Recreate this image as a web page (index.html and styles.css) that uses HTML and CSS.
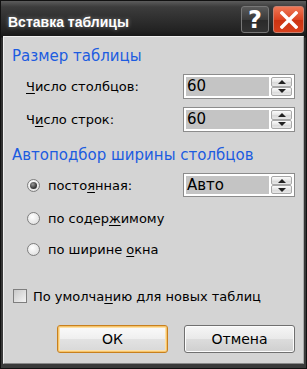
FILE: index.html
```html
<!DOCTYPE html>
<html lang="ru">
<head>
<meta charset="utf-8">
<link rel="stylesheet" href="styles.css">
</head>
<body>
<div class="window">
  <div class="titlebar">
    <div class="title">Вставка таблицы</div>
    <div class="tbtns">
      <div class="tbtn help">?</div>
      <div class="tbtn close">
        <svg width="18" height="18" viewBox="0 0 18 18"><path d="M2 2 L16 16 M16 2 L2 16" stroke="#fff" stroke-width="3.4" stroke-linecap="square"/></svg>
      </div>
    </div>
  </div>
  <div class="client">
    <div class="header h1">Размер таблицы</div>
    <div class="row r1">
      <div class="label"><u>Ч</u>исло столбцов:</div>
      <div class="spin"><div class="field">60</div><div class="arrows"><div class="arr up"><span class="tri-up"></span></div><div class="arr dn"><span class="tri-dn"></span></div></div></div>
    </div>
    <div class="row r2">
      <div class="label">Ч<u>и</u>сло строк:</div>
      <div class="spin"><div class="field">60</div><div class="arrows"><div class="arr up"><span class="tri-up"></span></div><div class="arr dn"><span class="tri-dn"></span></div></div></div>
    </div>
    <div class="header h2">Автоподбор ширины столбцов</div>
    <div class="row rr1">
      <div class="opt"><span class="radio on"></span><span>посто<u>я</u>нная:</span></div>
      <div class="spin combo"><div class="field">Авто</div><div class="arrows"><div class="arr up"><span class="tri-up"></span></div><div class="arr dn"><span class="tri-dn"></span></div></div></div>
    </div>
    <div class="row rr2">
      <div class="opt"><span class="radio"></span><span>по содер<u>ж</u>имому</span></div>
    </div>
    <div class="row rr3">
      <div class="opt"><span class="radio"></span><span>по ширине <u>о</u>кна</span></div>
    </div>
    <div class="row chk">
      <div class="opt"><span class="checkbox"></span><span>По умолча<u>н</u>ию для новых таблиц</span></div>
    </div>
    <div class="buttons">
      <div class="btn ok">ОК</div>
      <div class="btn">Отмена</div>
    </div>
  </div>
</div>
</body>
</html>
```
FILE: styles.css
```css
html, body {
  margin: 0;
  padding: 0;
  background: #2a2a2a;
}
.window {
  width: 307px;
  height: 369px;
  box-sizing: border-box;
  display: flex;
  flex-direction: column;
  background: linear-gradient(#5c5c5c 0px, #3c3c3c 6px, #222 30px, #161616 36px, #2e2e2e 37px, #3a3a3a 100%);
  border: 1px solid #111;
  font-family: "DejaVu Sans", Tahoma, sans-serif;
  font-size: 13px;
  color: #000;
}
.titlebar {
  height: 35px;
  display: flex;
  align-items: flex-start;
  justify-content: space-between;
  padding: 0 2px 0 7px;
  flex-shrink: 0;
}
.title {
  color: #fff;
  font-family: "Liberation Sans", Arial, sans-serif;
  font-weight: bold;
  font-size: 14px;
  line-height: 18px;
  margin-top: 12px;
  text-shadow: 0 0 4px rgba(255,255,255,0.4);
}
.tbtns {
  display: flex;
  gap: 4px;
  margin-top: 5px;
}
.tbtn {
  height: 27px;
  box-sizing: border-box;
  border-radius: 3px;
  display: flex;
  align-items: center;
  justify-content: center;
}
.help {
  width: 28px;
  background: linear-gradient(#5a5a5a, #3a3a3a 50%, #2a2a2a 51%, #333);
  border: 1px solid #777;
  color: #fff;
  font-family: "DejaVu Sans", sans-serif;
  font-weight: bold;
  font-size: 24px;
  line-height: 1;
}
.close {
  width: 31px;
  background: linear-gradient(#ee7755, #dd4422 50%, #cc3311 51%, #d8401c);
  border: 1px solid #c98070;
}
.client {
  flex: 1;
  margin: 0 2px 4px 2px;
  background: #d4d4d4;
  border: 1px solid #f0f0f0;
  border-bottom-color: #888;
  border-right-color: #aaa;
  padding: 0 8px 0 8px;
  display: flex;
  flex-direction: column;
}
.header {
  color: #1c5ce0;
  height: 20px;
  line-height: 20px;
  font-size: 15px;
}
.h1 { margin-top: 9px; }
.h2 { margin-top: 13px; }
.row {
  display: flex;
  align-items: center;
  justify-content: space-between;
}
.r1 { margin-top: 8px; height: 25px; }
.r2 { margin-top: 8px; height: 25px; }
.rr1 { margin-top: 8px; height: 24px; }
.rr2 { margin-top: 9px; height: 24px; }
.rr3 { margin-top: 7px; height: 24px; }
.chk { margin-top: 23px; height: 24px; }
.label { padding-left: 14px; }
.spin {
  width: 112px;
  height: 25px;
  box-sizing: border-box;
  border: 1px solid #8c8c8c;
  background: #fff;
  padding: 2px;
  display: flex;
  gap: 2px;
}
.combo { height: 24px; }
.field {
  flex: 1;
  background: #c4c4c4;
  font-size: 15px;
  line-height: 19px;
  padding-left: 1px;
  color: #000;
}
.arrows {
  width: 21px;
  display: flex;
  flex-direction: column;
  gap: 0;
}
.arr {
  flex: 1;
  box-sizing: border-box;
  border: 1px solid #a8a8a8;
  border-radius: 2px;
  background: linear-gradient(#fbfbfb, #e6e6e6 50%, #d8d8d8 51%, #e8e8e8);
  display: flex;
  align-items: center;
  justify-content: center;
}
.tri-up {
  width: 0; height: 0;
  border-left: 4px solid transparent;
  border-right: 4px solid transparent;
  border-bottom: 4px solid #222;
}
.tri-dn {
  width: 0; height: 0;
  border-left: 4px solid transparent;
  border-right: 4px solid transparent;
  border-top: 4px solid #222;
}
.opt {
  display: flex;
  align-items: center;
}
.radio {
  width: 13px;
  height: 13px;
  box-sizing: border-box;
  border-radius: 50%;
  border: 1px solid #7e7e7e;
  background: radial-gradient(circle at 40% 35%, #ffffff, #e4e4e4 70%, #d0d0d0);
  margin-left: 15px;
  margin-right: 8px;
  display: flex;
  align-items: center;
  justify-content: center;
}
.radio.on::after {
  content: "";
  width: 7px;
  height: 7px;
  border-radius: 50%;
  background: radial-gradient(circle at 40% 35%, #9a9a9a, #3a3a3a 60%, #222);
}
.checkbox {
  width: 14px;
  height: 14px;
  box-sizing: border-box;
  border: 1px solid #7e7e7e;
  background: linear-gradient(135deg, #c8c8c8, #f4f4f4);
  margin-left: 1px;
  margin-right: 6px;
}
.buttons {
  margin-top: 17px;
  display: flex;
  justify-content: flex-end;
  gap: 16px;
}
.btn {
  width: 111px;
  height: 28px;
  box-sizing: border-box;
  border: 1px solid #707070;
  border-radius: 3px;
  background: linear-gradient(#f6f6f6, #e9e9e9 50%, #dcdcdc 51%, #cfcfcf);
  box-shadow: inset 0 0 0 1px #fcfcfc;
  display: flex;
  align-items: center;
  justify-content: center;
  font-size: 14px;
}
.btn.ok {
  border-color: #c8801e;
  box-shadow: inset 0 0 0 1px #f6c46a, inset 0 0 0 2px #fde0a8;
  background: linear-gradient(#fbfbfb, #efefef 50%, #e2e2e2 51%, #d8d8d8);
}
u {
  text-decoration: underline;
  text-underline-offset: 2px;
}
```
